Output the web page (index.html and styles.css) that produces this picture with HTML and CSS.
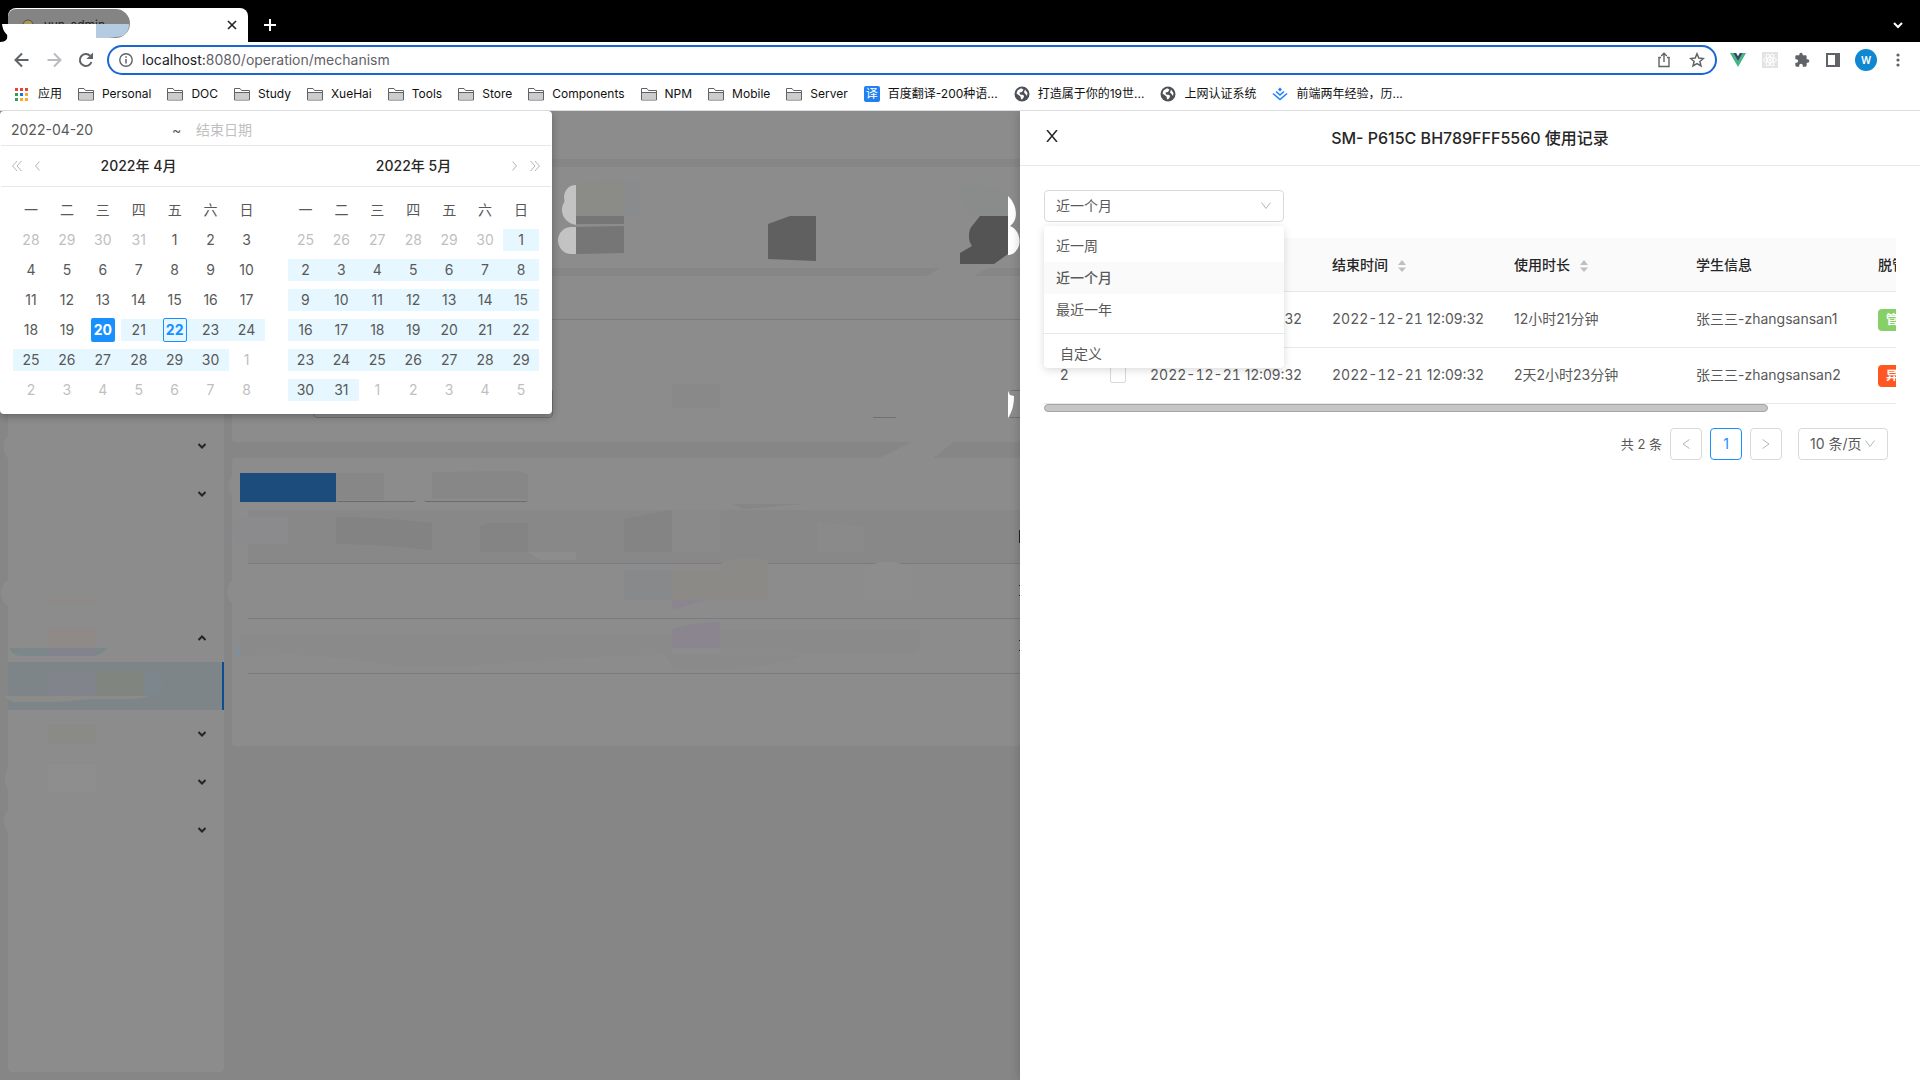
FILE: index.html
```html
<!DOCTYPE html>
<html lang="zh-CN">
<head>
  <meta charset="UTF-8">
  <title>yun_admin</title>
  <link rel="stylesheet" href="styles.css">
</head>

<body>

<!-- browser chrome -->
<div class="tab-strip">
  <div class="tab">
    <svg class="tab-favicon" width="12" height="12" viewBox="0 0 12 12"><circle cx="6" cy="6" r="5" fill="#a8985a" stroke="#55503c"/></svg>
    <span class="tab-title">yun_admin</span>
    <button class="tab-close" aria-label="Close tab">
      <svg width="10" height="10" viewBox="0 0 10 10"><path d="M1 1l8 8M9 1l-8 8" stroke="#202124" stroke-width="1.6"/></svg>
    </button>
    <svg class="tab-smudge" width="140" height="42" viewBox="0 0 140 42">
      <path d="M2 24H96V38H40L8 42H0C6 42 8 39 7 35C4 33 2 28 2 24Z" fill="#fff"/>
      <path d="M0 40C5 39 8 37 7 35C4 32 2 28 2 24H0Z" fill="#000"/>
      <path d="M96 24H129C129 33 124 37 116 37L109 38H96Z" fill="#b5cbe1"/>
    </svg>
  </div>
  <button class="new-tab" aria-label="New tab">
    <svg width="12" height="12" viewBox="0 0 12 12"><path d="M6 0v12M0 6h12" stroke="#fff" stroke-width="2"/></svg>
  </button>
  <button class="tab-search" aria-label="Search tabs">
    <svg width="10" height="7" viewBox="0 0 10 7"><path d="M1 1l4 4 4-4" fill="none" stroke="#fff" stroke-width="2"/></svg>
  </button>
</div>

<div class="toolbar">
  <button class="tool" aria-label="Back">
    <svg width="16" height="16" viewBox="0 0 16 16"><path d="M14.500 8H2M8 1.500L1.500 8 8 14.500" fill="none" stroke="#5f6368" stroke-width="2"/></svg>
  </button>
  <button class="tool" aria-label="Forward">
    <svg width="16" height="16" viewBox="0 0 16 16"><path d="M1.500 8H14M8 1.500L14.500 8 8 14.500" fill="none" stroke="#b9bbbe" stroke-width="2"/></svg>
  </button>
  <button class="tool" aria-label="Reload">
    <svg width="16" height="16" viewBox="0 0 16 16"><path d="M13.500 10A6 6 0 1 1 12.200 3.800" fill="none" stroke="#5f6368" stroke-width="2"/><path d="M15 0.500V7H8.500Z" fill="#5f6368"/></svg>
  </button>
  <div class="address">
    <svg width="14" height="14" viewBox="0 0 14 14"><circle cx="7" cy="7" r="6.200" fill="none" stroke="#5f6368" stroke-width="1.400"/><path d="M7 6v4.500M7 3.300v1.500" stroke="#5f6368" stroke-width="1.500"/></svg>
    <a class="url" href="#"><b>localhost:</b>8080/operation/mechanism</a>
    <svg width="14" height="16" viewBox="0 0 14 16"><path d="M4 5.500H2V14.500H12V5.500H10M7 10V1.500M4.200 4L7 1.200 9.800 4" fill="none" stroke="#5f6368" stroke-width="1.400"/></svg>
    <svg width="16" height="16" viewBox="0 0 16 16"><path d="M8 1.800L9.800 6.100 14.400 6.500 10.900 9.500 12 14 8 11.600 4 14 5.100 9.500 1.600 6.500 6.200 6.100Z" fill="none" stroke="#5f6368" stroke-width="1.500"/></svg>
  </div>
  <div class="extensions">
    <svg width="16" height="16" viewBox="0 0 16 16"><path d="M0 1H3.200L8 9.300 12.800 1H16L8 15Z" fill="#41b883"/><path d="M3.200 1H6.200L8 4.200 9.800 1H12.800L8 9.300Z" fill="#34495e"/></svg>
    <svg width="16" height="16" viewBox="0 0 16 16"><rect width="16" height="16" fill="#e3e3e3"/><g fill="none" stroke="#fff"><ellipse cx="8" cy="8" rx="6.500" ry="2.500"/><ellipse cx="8" cy="8" rx="6.500" ry="2.500" transform="rotate(60 8 8)"/><ellipse cx="8" cy="8" rx="6.500" ry="2.500" transform="rotate(120 8 8)"/></g><circle cx="8" cy="8" r="1.300" fill="#fff"/></svg>
    <svg width="16" height="16" viewBox="0 0 24 24"><path d="M20.500 11H19V7a2 2 0 0 0-2-2h-4V3.500a2.500 2.500 0 0 0-5 0V5H4a2 2 0 0 0-2 2v3.800h1.500a2.700 2.700 0 0 1 0 5.400H2V20a2 2 0 0 0 2 2h3.800v-1.500a2.700 2.700 0 0 1 5.400 0V22H17a2 2 0 0 0 2-2v-4h1.500a2.500 2.500 0 0 0 0-5z" fill="#5f6368"/></svg>
    <svg width="14" height="14" viewBox="0 0 14 14"><path d="M0 0H14V14H0ZM2 2V12H9V2Z" fill="#5f6368" fill-rule="evenodd"/></svg>
    <span class="avatar">W</span>
    <svg width="4" height="14" viewBox="0 0 4 14" fill="#5f6368"><circle cx="2" cy="2" r="1.600"/><circle cx="2" cy="7" r="1.600"/><circle cx="2" cy="12" r="1.600"/></svg>
  </div>
</div>

<svg class="symbols">
  <symbol id="folder" viewBox="0 0 16 14"><path d="M0.500 13V1.500H6L7.500 3.500H15.500V13Z" fill="#fff" stroke="#5f6368"/><path d="M1 6H15V12.500H1Z" fill="#ccc"/><path d="M1 5.500H15" stroke="#5f6368"/></symbol>
  <symbol id="globe" viewBox="0 0 16 16"><circle cx="8" cy="8" r="7.500" fill="#4d5156"/><path d="M7 2.200L9.500 3.500 8 6 5.500 6.500 6 8.500 9.500 9 10 11 8 13.500 7 13 6.500 10.500 2.500 7.500 3.500 4.500ZM11 3.500L13.500 7 13 10 11.500 8 10 6.500Z" fill="#fff"/></symbol>
  <symbol id="chevron" viewBox="0 0 8 6"><path d="M0.500 1l3.500 3.500L7.500 1" fill="none" stroke="currentColor" stroke-width="2"/></symbol>
</svg>

<nav class="bookmarks">
  <a href="#">
    <svg width="16" height="16" viewBox="0 0 16 16"><path d="M1 2h3v3H1z M6 2h3v3H6z M11 2h3v3h-3z" fill="#ea4335"/><path d="M1 7h3v3H1z M1 12h3v3H1z" fill="#34a053"/><path d="M6 7h3v3H6z" fill="#1a73e8"/><path d="M11 7h3v3h-3z M6 12h3v3H6z M11 12h3v3h-3z" fill="#f9ab2b"/></svg>应用</a>
  <a href="#"><svg width="16" height="14"><use href="#folder"/></svg>Personal</a>
  <a href="#"><svg width="16" height="14"><use href="#folder"/></svg>DOC</a>
  <a href="#"><svg width="16" height="14"><use href="#folder"/></svg>Study</a>
  <a href="#"><svg width="16" height="14"><use href="#folder"/></svg>XueHai</a>
  <a href="#"><svg width="16" height="14"><use href="#folder"/></svg>Tools</a>
  <a href="#"><svg width="16" height="14"><use href="#folder"/></svg>Store</a>
  <a href="#"><svg width="16" height="14"><use href="#folder"/></svg>Components</a>
  <a href="#"><svg width="16" height="14"><use href="#folder"/></svg>NPM</a>
  <a href="#"><svg width="16" height="14"><use href="#folder"/></svg>Mobile</a>
  <a href="#"><svg width="16" height="14"><use href="#folder"/></svg>Server</a>
  <a href="#"><span class="translate-logo">译</span>百度翻译-200种语...</a>
  <a href="#"><svg width="16" height="16"><use href="#globe"/></svg>打造属于你的19世...</a>
  <a href="#"><svg width="16" height="16"><use href="#globe"/></svg>上网认证系统</a>
  <a href="#"><svg width="16" height="16" viewBox="0 0 16 16"><path d="M8 1.500L10 3.500 8 5.500 6 3.500Z" fill="#1e80ff"/><path d="M4 5.500L8 9 12 5.500M1 7.500L8 13.500 15 7.500" fill="none" stroke="#1e80ff" stroke-width="1.600"/></svg>前端两年经验，历...</a>
</nav>

<div class="viewport">

  <!-- admin page -->
  <div class="app">
    <header class="app-header"></header>
    <div class="app-body">
      <aside class="sidebar">
        <button class="menu-item" aria-label="menu 1"></button>
        <button class="menu-item" aria-label="menu 2"></button>
        <button class="menu-item" aria-label="menu 3"></button>
        <button class="menu-item" aria-label="menu 4"></button>
        <button class="menu-item" aria-label="menu 5"></button>
        <button class="menu-item" aria-label="menu 6"><svg width="8" height="6"><use href="#chevron"/></svg></button>
        <button class="menu-item" aria-label="menu 7"><svg width="8" height="6"><use href="#chevron"/></svg></button>
        <button class="menu-item" aria-label="menu 8"></button>
        <button class="menu-item" aria-label="menu 9"></button>
        <button class="menu-item open" aria-label="menu 10"><svg width="8" height="6"><use href="#chevron"/></svg></button>
        <button class="menu-item active" aria-label="menu 11"></button>
        <button class="menu-item" aria-label="menu 12"><svg width="8" height="6"><use href="#chevron"/></svg></button>
        <button class="menu-item" aria-label="menu 13"><svg width="8" height="6"><use href="#chevron"/></svg></button>
        <button class="menu-item" aria-label="menu 14"><svg width="8" height="6"><use href="#chevron"/></svg></button>
      </aside>
      <main class="content">
        <section class="card summary"></section>
        <section class="card filter">
          <div class="filter-title"></div>
          <div class="filter-form"><input type="text" aria-label="filter"></div>
        </section>
        <section class="card list">
          <div class="list-actions">
            <button class="btn-primary" aria-label="action 1"></button>
            <button class="btn-plain" aria-label="action 2"></button>
            <button class="btn-plain wide" aria-label="action 3"></button>
          </div>
          <div class="list-head"></div>
          <div class="list-row"></div>
          <div class="list-row"></div>
        </section>
      </main>
    </div>
  </div>

  <div class="mask"></div>

  <!-- painted-over areas of the admin page -->
  <svg class="smudges" width="1020" height="969" viewBox="0 111 1020 969">
    <path d="M576 185C568 185 564 191 564 198C565 200 564 202 564 203C560 208 561 222 576 225Z" fill="#c3c3c3"/>
    <path d="M576 227H571C564 227 558 233 558 240C558 248 564 254 571 254H576Z" fill="#c3c3c3"/>
    <path d="M576 183L624 180V216H576Z" fill="#8b8b88"/>
    <path d="M624 182H640V216H624Z" fill="#8a8b8d"/>
    <path d="M576 216H624V224H576ZM576 227L624 226V253L576 254Z" fill="#767676"/>
    <path d="M768 224L790 216H816V261L768 259Z" fill="#606060"/>
    <path d="M980 216H1008V254L994 264H960V253L972 246C967 240 969 229 972 226Z" fill="#545454"/>
    <path d="M960 184L976 182L1008 194V216H972C960 208 960 196 960 184Z" fill="#8a8c8b"/>
    <path d="M1008 196C1016 203 1020 219 1010 226C1018 229 1022 240 1018 248C1015 253 1012 255 1008 255Z" fill="#fff"/>
    <path d="M1008 391L1010 395L1014 396C1014 405 1012 412 1008 418Z" fill="#fff"/>
    <path d="M1011 390.500H1020M1010 417.500H1020" stroke="#717171"/>
    <path d="M940 268H988L972 277H925Z" fill="#8c8c8c"/>
    <path d="M911 442H954L932 459H878Z" fill="#8c8c8c"/>
    <path d="M873 417.500H896" stroke="#717171"/>
    <path d="M672 384H720V408H672Z" fill="#898989"/>
    <!-- sidebar -->
    <path d="M8 436C2 440 3 454 8 458ZM8 580C-1 584 -1 602 8 606ZM8 768C4 774 4 784 8 790ZM8 810C2 816 3 826 8 832Z" fill="#8c8c8c"/>
    <path d="M48 600H96V604H48ZM48 628H96V648H48Z" fill="#8f8a87"/>
    <path d="M9 648H107C103 653 98 656 92 656H22C15 656 12 653 9 648Z" fill="#7c8789"/>
    <path d="M48 648H96V656H48Z" fill="#82838d"/>
    <path d="M48 673H96V696H48Z" fill="#81848b"/>
    <path d="M96 671H144V696H96Z" fill="#80857f"/>
    <path d="M144 672H158C162 678 164 690 160 696H144Z" fill="#7e868d"/>
    <path d="M5 696H148C142 700 125 699 96 699C80 699 72 702 52 702H18C12 702 8 700 5 696Z" fill="#8b8b89"/>
    <path d="M48 724H96V744H48Z" fill="#8a8a86"/>
    <path d="M48 764H96V792H48Z" fill="#8e8e8e"/>
    <!-- table -->
    <path d="M232 477C227 482 227 492 232 496ZM240 517C230 520 229 538 240 544H288V517Z" fill="#8b8b8e"/>
    <path d="M232 581C226 584 225 600 232 602Z" fill="#8c8c8c"/>
    <path d="M336 473H384V500H336ZM432 472L520 471L528 474V499H432Z" fill="#878787"/>
    <path d="M336 517C370 517 400 520 432 523V550C400 547 370 544 336 544Z" fill="#838383"/>
    <path d="M480 526L490 523H528V552H480ZM624 519L672 510V552H624Z" fill="#848484"/>
    <path d="M672 510H720V552H672ZM817 522L864 526V552H817Z" fill="#8a8a8a"/>
    <path d="M528 552H576V560H540Z" fill="#8d8d8d"/>
    <path d="M624 570H672V600H624Z" fill="#88898b"/>
    <path d="M672 570H720V600H672ZM720 565C730 556 768 556 768 562V600H720Z" fill="#8b8a87"/>
    <path d="M864 567L880 562H895L912 567V600H864Z" fill="#8d8d8d"/>
    <path d="M672 600H708C690 604 682 608 672 609ZM672 629C690 624 700 623 720 622V648H672Z" fill="#8b8590"/>
    <path d="M240 633H672V655C550 655 480 670 400 666C350 660 330 652 240 656ZM665 655H800C790 665 720 672 675 670Z" fill="#8a8a8a"/>
    <path d="M720 630H918C922 640 920 650 912 654H720Z" fill="#8a8a8a"/>
    <path d="M733 504H804L744 509Z" fill="#868686"/>
    <path d="M234 648H240V656C237 655 235 652 234 648Z" fill="#7f8f9c"/>
    <path d="M1019 530H1020V543H1019ZM1019 585H1020V586H1019ZM1019 595H1020V596H1019ZM1019 640H1020V641H1019ZM1019 650H1020V651H1019Z" fill="#222"/>
  </svg>

  <!-- range picker -->
  <div class="picker">
    <div class="picker-inputs">
      <input type="text" value="2022-04-20" aria-label="开始日期">
      <span>~</span>
      <input type="text" placeholder="结束日期" aria-label="结束日期">
    </div>
    <div class="picker-header">
      <div class="picker-month">
        <button aria-label="上一年"><svg width="10" height="10" viewBox="0 0 10 10"><path d="M5 0L0.500 5 5 10M9.500 0L5 5 9.500 10"/></svg></button>
        <button aria-label="上个月"><svg width="5" height="10" viewBox="0 0 5 10"><path d="M4.500 0.500L0.500 5 4.500 9.500"/></svg></button>
        <strong>2022年 4月</strong>
      </div>
      <div class="picker-month right">
        <strong>2022年 5月</strong>
        <button aria-label="下个月"><svg width="5" height="10" viewBox="0 0 5 10"><path d="M0.500 0.500L4.500 5 0.500 9.500"/></svg></button>
        <button aria-label="下一年"><svg width="10" height="10" viewBox="0 0 10 10"><path d="M0.500 0L5 5 0.500 10M5 0L9.500 5 5 10"/></svg></button>
      </div>
    </div>
    <div class="picker-body">
      <table id="april">
        <thead><tr><th>一</th><th>二</th><th>三</th><th>四</th><th>五</th><th>六</th><th>日</th></tr></thead>
        <tbody></tbody>
      </table>
      <table id="may">
        <thead><tr><th>一</th><th>二</th><th>三</th><th>四</th><th>五</th><th>六</th><th>日</th></tr></thead>
        <tbody></tbody>
      </table>
    </div>
  </div>

  <!-- usage drawer -->
  <div class="drawer">
    <div class="drawer-header">
      <button class="drawer-close" aria-label="关闭">
        <svg width="12" height="12" viewBox="0 0 12 12"><path d="M1 0l10 12M11 0L1 12" stroke="#262626" stroke-width="1.500"/></svg>
      </button>
      <h2>SM- P615C BH789FFF5560 使用记录</h2>
    </div>

    <div class="drawer-body">
      <div class="range-select">
        <select aria-label="时间范围">
          <option>近一个月</option>
        </select>
        <svg class="arrow" width="10" height="8" viewBox="0 0 10 8"><path d="M0.500 0.500L5 6.500 9.500 0.500"/></svg>
        <div class="dropdown">
          <ul>
            <li>近一周</li>
            <li class="selected">近一个月</li>
            <li>最近一年</li>
          </ul>
          <div class="custom">自定义</div>
        </div>
      </div>

      <div class="table-wrap">
        <table class="records">
          <colgroup><col class="col-index"><col class="col-check"><col><col><col><col><col></colgroup>
          <thead>
            <tr>
              <th></th>
              <th></th>
              <th></th>
              <th>结束时间 <svg class="sorter" width="8" height="12" viewBox="0 0 8 12"><path d="M0 5L4 0 8 5ZM0 7.500L4 12 8 7.500Z"/></svg></th>
              <th>使用时长 <svg class="sorter" width="8" height="12" viewBox="0 0 8 12"><path d="M0 5L4 0 8 5ZM0 7.500L4 12 8 7.500Z"/></svg></th>
              <th>学生信息</th>
              <th>脱管状态</th>
            </tr>
          </thead>
          <tbody>
            <tr>
              <td>1</td>
              <td class="check"><input type="checkbox" aria-label="选择 1"></td>
              <td><span class="date">2022-12-21</span> 12:09:32</td>
              <td><span class="date">2022-12-21</span> 12:09:32</td>
              <td>12小时21分钟</td>
              <td>张三三-zhangsansan1</td>
              <td><span class="tag green">管控中</span></td>
            </tr>
            <tr>
              <td>2</td>
              <td class="check"><input type="checkbox" aria-label="选择 2"></td>
              <td><span class="date">2022-12-21</span> 12:09:32</td>
              <td><span class="date">2022-12-21</span> 12:09:32</td>
              <td>2天2小时23分钟</td>
              <td>张三三-zhangsansan2</td>
              <td><span class="tag orange">异常</span></td>
            </tr>
          </tbody>
        </table>
        <div class="scrollbar"></div>
      </div>

      <div class="pagination">
        <span class="total">共 2 条</span>
        <button aria-label="上一页"><svg width="8" height="10" viewBox="0 0 8 10"><path d="M7.500 0.500L1 5 7.500 9.500"/></svg></button>
        <button class="current">1</button>
        <button aria-label="下一页"><svg width="8" height="10" viewBox="0 0 8 10"><path d="M0.500 0.500L7 5 0.500 9.500"/></svg></button>
        <div class="page-size">
          <select aria-label="每页条数">
            <option>10 条/页</option>
          </select>
          <svg class="arrow" width="10" height="8" viewBox="0 0 10 8"><path d="M0.500 0.500L5 6.500 9.500 0.500"/></svg>
        </div>
      </div>
    </div>
  </div>

</div>

<script>
const start = new Date(2022, 3, 20);
const today = new Date(2022, 3, 22);

// first = date shown in the top left cell
function renderMonth(id, month, first) {
  const tbody = document.querySelector(`#${id} tbody`);
  const day = new Date(first);

  for (let week = 0; week < 6; week++) {
    const row = document.createElement('tr');
    for (let i = 0; i < 7; i++) {
      let cls = '';
      if (day.getMonth() !== month) cls = 'other';
      else if (+day === +start) cls = 'start';
      else if (day > start) cls = 'in-range';
      if (cls !== 'other' && +day === +today) cls += ' today';
      row.innerHTML += `<td class="${cls}"><span>${day.getDate()}</span></td>`;
      day.setDate(day.getDate() + 1);
    }
    tbody.appendChild(row);
  }
}

renderMonth('april', 3, new Date(2022, 2, 28));
renderMonth('may', 4, new Date(2022, 3, 25));
</script>

</body>
</html>
```

FILE: styles.css
```css
* {
  margin: 0;
  padding: 0;
  box-sizing: border-box;
}

body {
  height: 100vh;
  display: flex;
  flex-direction: column;
  overflow: hidden;
  font-family: Inter, "Noto Sans CJK SC", sans-serif;
  font-size: 14px;
  line-height: 22px;
  color: #595959;
  background: #fff;
}

button, input, select {
  font: inherit;
  color: inherit;
  border: none;
  background: none;
  outline: none;
}

svg {
  display: block;
  flex: none;
}

.symbols {
  position: absolute;
  width: 0;
  height: 0;
}

/* browser chrome */
.tab-strip {
  height: 42px;
  flex: none;
  display: flex;
  align-items: center;
  background: #000;
  padding: 8px 17px 0 8px;
}

.tab {
  position: relative;
  width: 240px;
  height: 34px;
  display: flex;
  align-items: center;
  background: #fff;
  border-radius: 8px 8px 0 0;
  padding: 0 11px 0 0;
}

.tab::before {
  content: "";
  position: absolute;
  left: 0;
  top: 1px;
  width: 122px;
  height: 29px;
  background: #848484;
  border-radius: 8px 15px 15px 0;
}

.tab-favicon {
  position: relative;
  margin-left: 14px;
}

.tab-title {
  position: relative;
  margin-left: 10px;
  font-size: 12px;
  color: #222;
}

.tab-close {
  margin-left: auto;
}

.tab-smudge {
  position: absolute;
  left: -8px;
  top: -8px;
}

.new-tab {
  margin-left: 16px;
}

.tab-search {
  margin-left: auto;
}

.toolbar {
  flex: none;
  height: 36px;
  display: flex;
  align-items: center;
  padding: 0 20px 0 14px;
}

.tool {
  margin-right: 16px;
}

.address {
  flex: 1;
  height: 30px;
  display: flex;
  align-items: center;
  border: 2px solid #1a66d2;
  border-radius: 15px;
  padding: 0 10px;
  gap: 18px;
  margin: 0 13px 0 -3px;
}

.url {
  flex: 1;
  color: #5f6368;
  text-decoration: none;
  margin-left: -9px;
}

.url b {
  font-weight: 400;
  color: #202124;
}

.extensions {
  display: flex;
  align-items: center;
  gap: 16px;
}

.avatar {
  width: 22px;
  height: 22px;
  margin: 0 3px 0 -1px;
  border-radius: 50%;
  background: #0f87d1;
  color: #fff;
  font-size: 10px;
  font-weight: 600;
  text-align: center;
}

.bookmarks {
  flex: none;
  height: 33px;
  display: flex;
  align-items: center;
  gap: 16px;
  padding: 0 14px;
  border-bottom: 1px solid #dadce0;
}

.bookmarks a {
  display: flex;
  align-items: center;
  gap: 8px;
  font-size: 12px;
  color: #111;
  text-decoration: none;
  white-space: nowrap;
}

.translate-logo {
  width: 16px;
  height: 16px;
  line-height: 16px;
  border-radius: 2px;
  background: #2080f0;
  color: #fff;
  text-align: center;
}

/* admin page */
.viewport {
  position: relative;
  flex: 1;
  overflow: hidden;
}

.app {
  height: 100%;
  display: flex;
  flex-direction: column;
  background: #f4f4f4;
}

.app-header {
  height: 48px;
  background: #fff;
}

.app-body {
  flex: 1;
  display: flex;
  gap: 8px;
  padding: 8px;
}

.sidebar {
  width: 216px;
  background: #fff;
  border-radius: 4px;
  padding-top: 15px;
}

.menu-item {
  width: 100%;
  height: 48px;
  display: flex;
  align-items: center;
  justify-content: flex-end;
  padding-right: 18px;
  color: #444;
}

.menu-item.open svg {
  transform: rotate(180deg);
}

.menu-item.active {
  background: #e6f3f8;
  border-right: 2px solid #1890ff;
}

.content {
  flex: 1;
}

.card {
  background: #fff;
  border-radius: 4px;
}

.summary {
  height: 101px;
  margin-bottom: 8px;
}

.filter {
  height: 166px;
  margin-bottom: 16px;
}

.filter-title {
  height: 44px;
  border-bottom: 1px solid #e0e0e0;
}

.filter-form {
  padding: 68px 0 0 81px;
}

.filter-form input {
  width: 240px;
  height: 30px;
  border: 1px solid #ccc;
  border-radius: 4px;
}

.list {
  height: 288px;
  padding: 15px 0 0 8px;
}

.list-actions {
  display: flex;
}

.list-actions button {
  height: 29px;
}

.btn-primary {
  width: 96px;
  background: #338ae2;
}

.btn-plain {
  width: 80px;
  margin-right: 8px;
  border-bottom: 1px solid #c4c4c4;
  border-radius: 3px;
}

.btn-plain.wide {
  width: 104px;
}

.list-head {
  height: 54px;
  margin: 8px 0 0 8px;
  background: #f8f8f8;
  border-bottom: 1px solid #e0e0e0;
}

.list-row {
  height: 55px;
  margin-left: 8px;
  border-bottom: 1px solid #e0e0e0;
}

.mask {
  position: absolute;
  inset: 0;
  background: rgba(0, 0, 0, 0.45);
}

.smudges {
  position: absolute;
  left: 0;
  top: 0;
}

/* range picker */
.picker {
  position: absolute;
  left: 0;
  top: 0;
  width: 552px;
  padding: 0 1px;
  background: #fff;
  border-radius: 4px;
  box-shadow: 0 2px 8px rgba(0, 0, 0, 0.3);
}

.picker-inputs {
  height: 35px;
  display: flex;
  align-items: center;
  padding: 0 10px;
  border-bottom: 1px solid #e8e8e8;
}

.picker-inputs input {
  width: 161px;
  padding-top: 4px;
}

.picker-inputs span {
  width: 24px;
  padding-top: 4px;
}

.picker-inputs ::placeholder {
  color: #bfbfbf;
}

.picker-header {
  height: 41px;
  display: flex;
  border-bottom: 1px solid #e8e8e8;
}

.picker-month {
  position: relative;
  flex: 1;
  display: flex;
  align-items: center;
  gap: 13px;
  padding: 0 11px;
}

.picker-month.right {
  justify-content: flex-end;
}

.picker-month strong {
  position: absolute;
  left: 0;
  right: 0;
  text-align: center;
  font-weight: 500;
  color: #262626;
  pointer-events: none;
}

.picker-month path, .arrow path, .pagination path {
  fill: none;
  stroke: #b4b4b4;
}

.picker-body {
  display: flex;
  gap: 23px;
  padding: 8px 12px 9px;
}

.picker-body table {
  width: 252px;
  table-layout: fixed;
  border-collapse: collapse;
}

.picker-body th, .picker-body td {
  height: 30px;
  text-align: center;
  font-weight: 400;
}

.picker-body td span {
  display: block;
}

.picker-body .other {
  color: #bfbfbf;
}

.picker-body .in-range span {
  background: #e6f7ff;
}

.picker-body .start span {
  width: 24px;
  height: 24px;
  line-height: 24px;
  margin: 0 auto;
  border-radius: 2px;
  background: #1890ff;
  color: #fff;
  font-weight: 700;
}

.picker-body .today {
  background: linear-gradient(#e6f7ff, #e6f7ff) center / 100% 22px no-repeat;
}

.picker-body .today span {
  width: 24px;
  height: 24px;
  margin: 0 auto;
  border: 1px solid #1890ff;
  border-radius: 2px;
  color: #1890ff;
  font-weight: 700;
}

/* usage drawer */
.drawer {
  position: absolute;
  top: 0;
  right: 0;
  bottom: 0;
  width: 900px;
  background: #fff;
  box-shadow: -2px 0 8px rgba(0, 0, 0, 0.15);
}

.drawer-header {
  position: relative;
  height: 55px;
  display: flex;
  align-items: center;
  justify-content: center;
  border-bottom: 1px solid #e8e8e8;
}

.drawer-close {
  position: absolute;
  left: 26px;
  top: 19px;
}

.drawer-header h2 {
  font-size: 16px;
  font-weight: 500;
  color: #262626;
}

.drawer-body {
  padding: 24px;
}

.range-select {
  position: relative;
  width: 240px;
  margin-bottom: 16px;
}

.range-select select, .page-size select {
  width: 100%;
  height: 32px;
  padding: 0 11px;
  appearance: none;
  border: 1px solid #d9d9d9;
  border-radius: 4px;
}

.arrow {
  position: absolute;
  right: 13px;
  top: 12px;
}

.dropdown {
  position: absolute;
  left: 0;
  top: 36px;
  width: 240px;
  background: #fff;
  border-radius: 4px;
  box-shadow: 0 2px 8px rgba(0, 0, 0, 0.15);
}

.dropdown ul {
  list-style: none;
  padding: 4px 0 7px;
  border-bottom: 1px solid #e8e8e8;
}

.dropdown li {
  padding: 5px 12px;
}

.dropdown .selected {
  background: #fafafa;
  font-weight: 500;
}

.custom {
  padding: 9px 16px 3px;
}

.table-wrap {
  overflow: hidden;
}

.records {
  width: 1000px;
  table-layout: fixed;
  border-collapse: separate;
  border-spacing: 0;
}

.col-index {
  width: 58px;
}

.col-check {
  width: 32px;
}

.records th {
  height: 54px;
  padding: 0 16px;
  text-align: left;
  font-weight: 500;
  color: #262626;
  background: #fafafa;
  border-bottom: 1px solid #e8e8e8;
}

.records td {
  height: 56px;
  padding: 0 16px 1px;
  white-space: nowrap;
  border-bottom: 1px solid #e8e8e8;
}

.records .date {
  font-variant-numeric: tabular-nums;
}

.records .check {
  padding: 0 8px 1px;
}

.check input {
  display: block;
  width: 16px;
  height: 16px;
  appearance: none;
  border: 1px solid #d9d9d9;
  border-radius: 2px;
}

.sorter {
  display: inline-block;
  margin-left: 6px;
  vertical-align: -2px;
  fill: #bfbfbf;
}

.tag {
  display: inline-block;
  padding: 0 8px;
  border-radius: 4px;
  color: #fff;
  font-size: 12px;
  font-weight: 600;
}

.green {
  background: #87d068;
}

.orange {
  background: #ff5722;
}

.scrollbar {
  width: 85%;
  height: 8px;
  border: 1px solid #a6a6a6;
  border-radius: 4px;
  background: #c6c6c6;
}

.pagination {
  display: flex;
  align-items: center;
  justify-content: flex-end;
  gap: 8px;
  margin-top: 16px;
  padding-right: 8px;
}

.pagination button {
  width: 32px;
  height: 32px;
  display: flex;
  align-items: center;
  justify-content: center;
  border: 1px solid #d9d9d9;
  border-radius: 4px;
}

.pagination .current {
  border-color: #1890ff;
  color: #1890ff;
}

.total {
  font-size: 13px;
}

.page-size {
  position: relative;
  width: 90px;
  margin-left: 8px;
}
```
